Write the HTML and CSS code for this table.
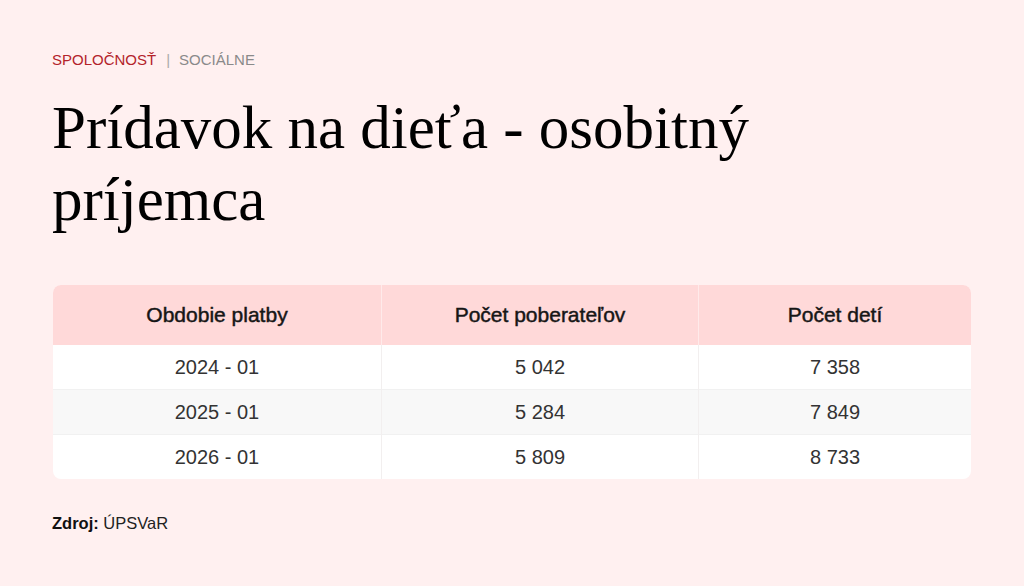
FILE: index.html
```html
<!DOCTYPE html>
<html lang="sk">
<head>
<meta charset="utf-8">
<link rel="stylesheet" href="styles.css">
</head>
<body>
<main class="page">
  <div class="crumbs"><span class="cat">SPOLOČNOSŤ</span><span class="sep">|</span><span class="sub">SOCIÁLNE</span></div>
  <h1 class="title">Prídavok na dieťa - osobitný príjemca</h1>
  <div class="table-wrap">
    <table class="data">
      <thead>
        <tr><th class="c1">Obdobie platby</th><th class="c2">Počet poberateľov</th><th class="c3">Počet detí</th></tr>
      </thead>
      <tbody>
        <tr><td>2024 - 01</td><td>5 042</td><td>7 358</td></tr>
        <tr><td>2025 - 01</td><td>5 284</td><td>7 849</td></tr>
        <tr><td>2026 - 01</td><td>5 809</td><td>8 733</td></tr>
      </tbody>
    </table>
  </div>
  <p class="source"><b>Zdroj:</b> ÚPSVaR</p>
</main>
</body>
</html>
```
FILE: styles.css
```css
html, body {
  margin: 0;
  padding: 0;
  background: #fff0f0;
}
body {
  font-family: "Liberation Sans", Arial, sans-serif;
  color: #111;
}
.page {
  padding: 50px 53px 0 52px;
  width: 1024px;
  height: 586px;
  box-sizing: border-box;
}
.crumbs {
  font-size: 15px;
  line-height: 20px;
  display: flex;
  align-items: center;
}
.cat {
  color: #b3232a;
}
.sep {
  color: #aaa;
  margin: 0 9px 0 10px;
}
.sub {
  color: #8a8a8a;
}
.title {
  font-family: "Liberation Serif", "Times New Roman", serif;
  font-weight: normal;
  font-size: 61px;
  line-height: 72px;
  margin: 22px 0 0 0;
  width: 760px;
  color: #000;
}
.table-wrap {
  margin-top: 49px;
  margin-left: 1px;
  width: 918px;
  border-radius: 8px;
  overflow: hidden;
  background: #fff;
}
.data {
  width: 100%;
  border-collapse: collapse;
  table-layout: fixed;
}
.data th {
  background: #ffd9d9;
  font-weight: normal;
  font-size: 21px;
  -webkit-text-stroke: 0.45px #161616;
  height: 60px;
  padding: 0;
  color: #161616;
}
.data .c1 { width: 328px; }
.data .c2 { width: 316px; }
.data th, .data td {
  text-align: center;
  border-left: 1px solid #f2efef;
}
.data th:first-child, .data td:first-child {
  border-left: none;
}
.data th { border-left-color: #ffeaea; }
.data td {
  font-size: 20px;
  color: #333;
  height: 44px;
  padding: 0;
  border-top: 1px solid #f1f1f1;
}
.data tbody tr:first-child td { border-top: none; }
.data tbody tr:nth-child(2) td {
  background: #f8f8f8;
}
.source {
  margin: 35px 0 0 0;
  font-size: 16.5px;
  color: #222;
}
.source b {
  color: #111;
}
```
